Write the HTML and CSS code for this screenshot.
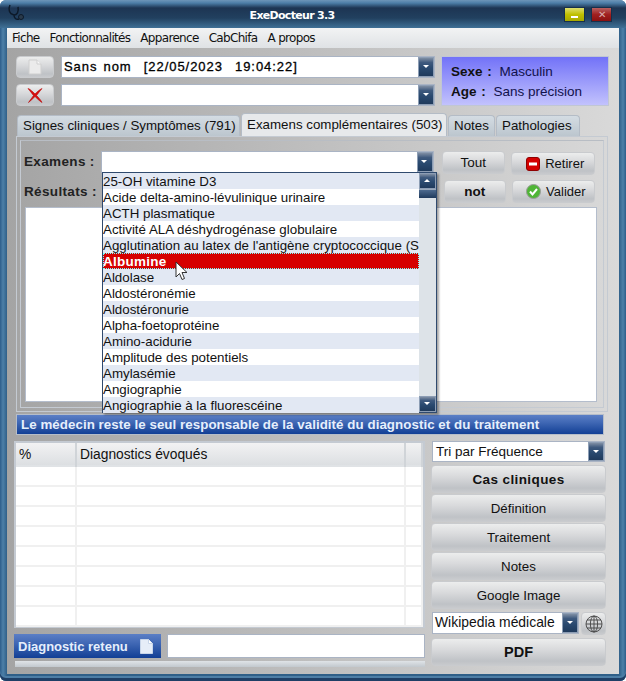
FILE: index.html
```html
<!DOCTYPE html>
<html lang="fr">
<head>
<meta charset="utf-8">
<title>ExeDocteur 3.3</title>
<link rel="stylesheet" href="styles.css">
</head>
<body>
<div class="window">
  <header class="titlebar">
    <svg class="app-icon" width="18" height="18" viewBox="0 0 18 18"><path d="M3 1C1 5 2 10 7 11c3 0 5-3 4-8M7 11c0 3 2 5 5 4" fill="none" stroke="#0d1a2a" stroke-width="1.5"/><circle cx="14" cy="13" r="2.5" fill="#2a3a4a" stroke="#0d1a2a"/></svg>
    <span class="title">ExeDocteur 3.3</span>
    <span class="win-btn win-min"><i></i></span>
    <span class="win-btn win-close">✕</span>
  </header>
  <nav class="menu"><span>Fiche</span><span>Fonctionnalités</span><span>Apparence</span><span>CabChifa</span><span>A propos</span></nav>
  <main class="client">
    <section class="top">
      <div class="top-rows">
        <div class="top-row">
          <button class="btn icon-btn"><svg width="14" height="16" viewBox="0 0 14 16"><path d="M1 1h8l4 4v10H1z" fill="#ebebeb" stroke="#cfcfcf"/><path d="M9 1v4h4" fill="#f8f8f8" stroke="#cfcfcf"/></svg></button>
          <div class="combo combo-name"><span class="combo-text mono">Sans nom&nbsp; [22/05/2023&nbsp; 19:04:22]</span><span class="arrow"></span></div>
        </div>
        <div class="top-row">
          <button class="btn icon-btn"><svg width="16" height="15" viewBox="0 0 16 15"><path d="M1 .5C3 1 6 4 8 6c2-2 4-4 7-5.500-2 2.500-4 5-5.500 7 2 2 4 4 5.500 7-3-2-5-4-7-6-2 2-4 4-6.500 6C3 12 5 10 6.500 7.500 5 5.500 3 3 1 .5z" fill="#d80f0f" stroke="#b00" stroke-width=".6"/></svg></button>
          <div class="combo combo-name"><span class="combo-text"></span><span class="arrow"></span></div>
        </div>
      </div>
      <aside class="info">
        <p><b>Sexe :</b> <span>Masculin</span></p>
        <p><b>Age :</b> <span>Sans précision</span></p>
      </aside>
    </section>

    <div class="tabs">
      <span class="tab tab-1">Signes cliniques / Symptômes (791)</span>
      <span class="tab tab-active">Examens complémentaires (503)</span>
      <span class="tab tab-3">Notes</span>
      <span class="tab tab-4">Pathologies</span>
    </div>
    <section class="panel">
      <div class="panel-inner">
        <div class="exam-row">
          <label class="field-label">Examens :</label>
          <div class="combo combo-exam"><span class="combo-text"></span><span class="arrow"></span></div>
          <button class="btn btn-tout">Tout</button>
          <button class="btn btn-act btn-retirer"><svg width="14" height="14" viewBox="0 0 14 14"><rect x="0.5" y="0.5" width="13" height="13" rx="2.5" fill="#d40000" stroke="#8e0000"/><rect x="3" y="5.500" width="8" height="3" fill="#fff"/></svg>Retirer</button>
        </div>
        <div class="result-row">
          <label class="field-label">Résultats :</label>
          <button class="btn btn-tout btn-not">not</button>
          <button class="btn btn-act"><svg width="15" height="15" viewBox="0 0 15 15"><circle cx="7.5" cy="7.5" r="7" fill="#4fb536" stroke="#9a9a9a"/><path d="M4 7.5l2.500 3L11 5" fill="none" stroke="#fff" stroke-width="2"/></svg>Valider</button>
        </div>
        <div class="textarea"></div>
      </div>
      <div class="dropdown">
        <ul class="list">
          <li>25-OH vitamine D3</li>
          <li>Acide delta-amino-lévulinique urinaire</li>
          <li>ACTH plasmatique</li>
          <li>Activité ALA déshydrogénase globulaire</li>
          <li>Agglutination au latex de l'antigène cryptococcique (S</li>
          <li class="selected">Albumine</li>
          <li>Aldolase</li>
          <li>Aldostéronémie</li>
          <li>Aldostéronurie</li>
          <li>Alpha-foetoprotéine</li>
          <li>Amino-acidurie</li>
          <li>Amplitude des potentiels</li>
          <li>Amylasémie</li>
          <li>Angiographie</li>
          <li>Angiographie à la fluorescéine</li>
        </ul>
        <div class="scrollbar">
          <span class="arrow arrow-up"></span>
          <span class="thumb"></span>
          <span class="track"></span>
          <span class="arrow arrow-down"></span>
        </div>
      </div>
      <svg class="cursor" width="14" height="20" viewBox="0 0 14 20"><path d="M1 1v15l3.500-3.500 2.500 6 2.500-1-2.500-6h5z" fill="#fff" stroke="#333"/></svg>
    </section>

    <div class="banner">Le médecin reste le seul responsable de la validité du diagnostic et du traitement</div>

    <section class="lower">
      <div class="lower-left">
        <div class="table">
          <div class="row head"><span>%</span><span>Diagnostics évoqués</span><span></span></div>
          <div class="row"><span></span><span></span><span></span></div>
          <div class="row"><span></span><span></span><span></span></div>
          <div class="row"><span></span><span></span><span></span></div>
          <div class="row"><span></span><span></span><span></span></div>
          <div class="row"><span></span><span></span><span></span></div>
          <div class="row"><span></span><span></span><span></span></div>
          <div class="row"><span></span><span></span><span></span></div>
          <div class="row"><span></span><span></span><span></span></div>
        </div>
        <div class="retained">
          <div class="retained-label">Diagnostic retenu<svg width="13" height="15" viewBox="0 0 13 15"><path d="M.5.5h8l4 4v10H.5z" fill="#e6edf8" stroke="#c9d6ea"/><path d="M8.500.5v4h4" fill="#fff" stroke="#c9d6ea"/></svg></div>
          <div class="retained-input"></div>
        </div>
        <div class="progress"></div>
      </div>
      <div class="lower-right">
        <div class="combo combo-sort"><span class="combo-text">Tri par Fréquence</span><span class="arrow"></span></div>
        <button class="btn big strong">Cas cliniques</button>
        <button class="btn big">Définition</button>
        <button class="btn big">Traitement</button>
        <button class="btn big">Notes</button>
        <button class="btn big">Google Image</button>
        <div class="wiki">
          <div class="combo combo-wiki"><span class="combo-text">Wikipedia médicale</span><span class="arrow"></span></div>
          <button class="btn globe"><svg width="18" height="18" viewBox="0 0 18 18" fill="none" stroke="#444" stroke-width=".9"><circle cx="9" cy="9" r="8"/><ellipse cx="9" cy="9" rx="3.6" ry="8"/><path d="M9 1v16M1 9h16M2 5h14M2 13h14"/></svg></button>
        </div>
        <button class="btn big pdf">PDF</button>
      </div>
    </section>
  </main>
</div>
</body>
</html>
```
FILE: styles.css
```css
* { box-sizing: border-box; }
html, body { margin: 0; padding: 0; }
body { width: 626px; height: 681px; overflow: hidden; background: #fff; font-family: "Liberation Sans", Arial, sans-serif; font-size: 13px; color: #111; }

.window { width: 626px; height: 681px; display: flex; flex-direction: column; padding: 0 7px 7px; border-radius: 6px; background: linear-gradient(90deg, #2d5d8a 0, #4d80a8 3px, #2f5f88 7px, #2f5f88 calc(100% - 7px), #4d80a8 calc(100% - 3px), #2d5d8a 100%); box-shadow: inset 0 -3px 0 #1f3f66, inset 0 -5px 0 #4d7ea6; }

.titlebar { height: 28px; margin: 0 -7px; padding: 0 14px 0 7px; display: flex; align-items: center; position: relative; border-radius: 6px 6px 0 0; background: linear-gradient(180deg, #6e95b8 0, #4d7ea8 3px, #1d3553 8px, #21405f 18px, #3f7096 28px); }
.app-icon { margin-top: -2px; }
.title { position: absolute; left: 0; right: 42px; text-align: center; top: 9px; font: bold 11px "DejaVu Sans", sans-serif; color: #fff; letter-spacing: -.7px; }
.win-btn { width: 21px; height: 15px; margin-left: 6px; border: 1px solid #16304c; display: flex; align-items: center; justify-content: center; color: #d8b0b0; font-size: 10px; }
.win-min { margin-left: auto; background: linear-gradient(180deg, #dede70 0, #c0c000 50%, #a8a800 100%); }
.win-min i { display: block; width: 7px; height: 2px; margin-top: 5px; background: #fff; }
.win-close { background: linear-gradient(180deg, #b86060 0, #a02020 50%, #8a1010 100%); }

.menu { height: 20px; margin: 0; display: flex; align-items: center; gap: 10px; padding: 0 0 0 5px; background: linear-gradient(180deg, #f2f3f4, #dfe2e5); font: 12px "DejaVu Sans", sans-serif; letter-spacing: -.68px; color: #111; }

.client { flex: 1; background: linear-gradient(90deg, #a4a4a4 0, #d9d9d9 100%); min-height: 0; }

.top { display: flex; margin: 8px 10px 0 9px; height: 50px; justify-content: space-between; }
.top-rows { display: flex; flex-direction: column; gap: 6px; }
.top-row { display: flex; gap: 7px; height: 22px; }

.btn { padding: 0; border: 1px solid #c9cbce; border-radius: 4px; background: linear-gradient(180deg, #eceded 0, #d9dadc 40%, #bfc2c6 85%, #c8cacd 100%); font: 13px "Liberation Sans", sans-serif; color: #111; display: flex; align-items: center; justify-content: center; }
.icon-btn { width: 38px; height: 22px; }

.combo { display: flex; background: #fff; border: 1px solid #aab4c4; height: 22px; }
.combo-text { flex: 1; min-width: 0; padding: 0 1px; line-height: 19px; white-space: nowrap; overflow: hidden; }
.mono { font-size: 13px; letter-spacing: .95px; word-spacing: 1.5px; padding-left: 2px; -webkit-text-stroke: .3px #000; color: #000; }
.arrow { width: 16px; flex: none; position: relative; background: linear-gradient(180deg, #7f8ea3 0, #3f5a7e 25%, #2a4a70 55%, #1f3a5c 100%); border: 1px solid #8c9db4; }
.arrow::after { content: ""; position: absolute; left: 50%; top: 50%; margin: -2px 0 0 -3.5px; border: 3.5px solid transparent; border-top: 3.5px solid #fff; border-bottom: 0; }
.combo-name { width: 374px; }

.info { width: 168px; padding: 7px 0 0 9px; border: 1px solid #c0c6d4; background: linear-gradient(180deg, #7272f8 0, #c2c2fd 100%); font-size: 13.5px; color: #11114a; }
.info p { margin: 0 0 5px; line-height: 15px; }
.info b { color: #111; margin-right: 4px; word-spacing: 1px; }

.tabs { display: flex; margin: 7px 0 0 10px; height: 23px; align-items: flex-end; }
.tab { height: 21px; padding: 1px 5px 0; margin-right: 1px; border: 1px solid #b4bcc6; border-bottom: 0; border-radius: 4px 4px 0 0; background: linear-gradient(180deg, #d4dce3, #bcc6ce); white-space: nowrap; line-height: 17px; font-size: 13.33px; }
.tab-1 { width: 223px; }
.tab-active { width: 206px; height: 23px; background: #e7e9eb; padding-top: 2px; }
.tab-3 { width: 47px; }
.tab-4 { width: 84px; }

.panel { position: relative; height: 276px; margin-left: 9px; width: 592px; border: 1px solid #c4cad2; padding: 3px; }
.panel-inner { height: 100%; border: 1px solid #c4cad2; padding: 10px 8px 0 3px; border-top-color: #b8bdc4; }
.exam-row, .result-row { display: flex; align-items: flex-start; }
.field-label { font-weight: bold; font-size: 13.5px; letter-spacing: .35px; color: #222; width: 77px; line-height: 20px; padding-top: 1px; flex: none; }
.combo-exam { width: 335px; margin-right: 8px; }
.btn-tout { width: 63px; height: 23px; margin-right: 6px; font-size: 13.5px; }
.btn-act { width: 85px; height: 23px; gap: 5px; padding-left: 5px; font-size: 13px; }
.btn-retirer { margin-top: 1px; }
.result-row { margin-top: 5px; }
.result-row .field-label { width: 420px; padding-top: 2px; }
.btn-not { font-weight: bold; }
.textarea { margin-top: 4px; margin-left: 1px; height: 195px; width: 572px; background: #fff; border: 1px solid #b4bdcc; }

.dropdown { position: absolute; left: 85px; top: 35px; width: 335px; height: 241px; display: flex; background: #fff; border: 1px solid #2f4a6e; box-shadow: 2px 2px 2px rgba(0,0,0,.35); }
.list { flex: 1; min-width: 0; margin: 0; padding: 0; list-style: none; }
.list li { height: 16px; line-height: 18px; white-space: nowrap; overflow: hidden; font-size: 13.33px; color: #111; }
.list li:nth-child(odd) { background: #e2e8f3; }
.list .selected, .list .selected:nth-child(odd) { background: #d60000; color: #fff; font-weight: bold; font-size: 13.5px; letter-spacing: .25px; outline: 1px dotted #7ff; outline-offset: -1px; }
.scrollbar { width: 17px; display: flex; flex-direction: column; background: #dde3e8; flex: none; }
.scrollbar .arrow { width: 100%; height: 16px; }
.arrow-up::after { border-top: 0; border-bottom: 3.5px solid #fff; }
.thumb { height: 9px; background: linear-gradient(180deg, #4d6a8e, #1f3a5c); border-top: 1px solid #9aa9bc; }
.track { flex: 1; }
.cursor { position: absolute; left: 158px; top: 124px; }

.banner { width: 588px; height: 21px; margin: 2px 0 0 9px; padding-left: 4px; line-height: 20px; font-weight: bold; font-size: 13.33px; letter-spacing: .05px; color: #e6effc; border: 1px solid #b5bdc9; background: linear-gradient(180deg, #5b7fc6 0, #3f67b4 40%, #123f95 100%); }

.lower { display: flex; margin: 6px 0 0 7px; gap: 6px; }
.lower-left { width: 411px; flex: none; }
.table { height: 187px; border: 2px solid #c4cad2; background: #fff; }
.row { display: grid; grid-template-columns: 61px 329px 1fr; height: 20px; border-bottom: 2px solid #f0f0f0; }
.row span { border-right: 2px solid #f0f0f0; }
.head { height: 24px; background: linear-gradient(180deg, #f2f2f3, #dcdfe2); border-bottom: 2px solid #e0e3e6; }
.head span { padding-left: 3px; line-height: 24px; border-right: 2px solid #d0d4d8; font-size: 13.8px; white-space: nowrap; }
.retained { display: flex; gap: 6px; margin-top: 6px; height: 24px; }
.retained-label { width: 147px; display: flex; align-items: center; justify-content: space-between; padding: 0 8px 0 4px; font-weight: bold; font-size: 13px; color: #e6effc; background: linear-gradient(180deg, #5b7fc6 0, #3f67b4 40%, #123f95 100%); }
.retained-input { flex: 1; background: #fff; border: 1px solid #aab4c4; }
.progress { height: 6px; margin: 3px 0 0 1px; background: linear-gradient(180deg, #dfe3e7, #c2c8ce); }

.lower-right { width: 175px; display: flex; flex-direction: column; }
.combo-sort { height: 21px; margin: 0 0 3px 1px; width: 173px; }
.combo-sort .combo-text { padding-left: 3px; font-size: 13.5px; }
.combo-wiki .combo-text { padding-left: 2px; font-size: 13.9px; }
.big { width: 175px; height: 28px; margin-bottom: 1px; font-size: 13.33px; flex: none; }
.strong { font-weight: bold; font-size: 13.5px; letter-spacing: .4px; }
.wiki { display: flex; margin: 2px 0 3px 1px; height: 23px; gap: 2px; }
.combo-wiki { width: 147px; height: 22px; }
.globe { width: 25px; height: 23px; }
.pdf { font-weight: bold; font-size: 14.5px; }
```
